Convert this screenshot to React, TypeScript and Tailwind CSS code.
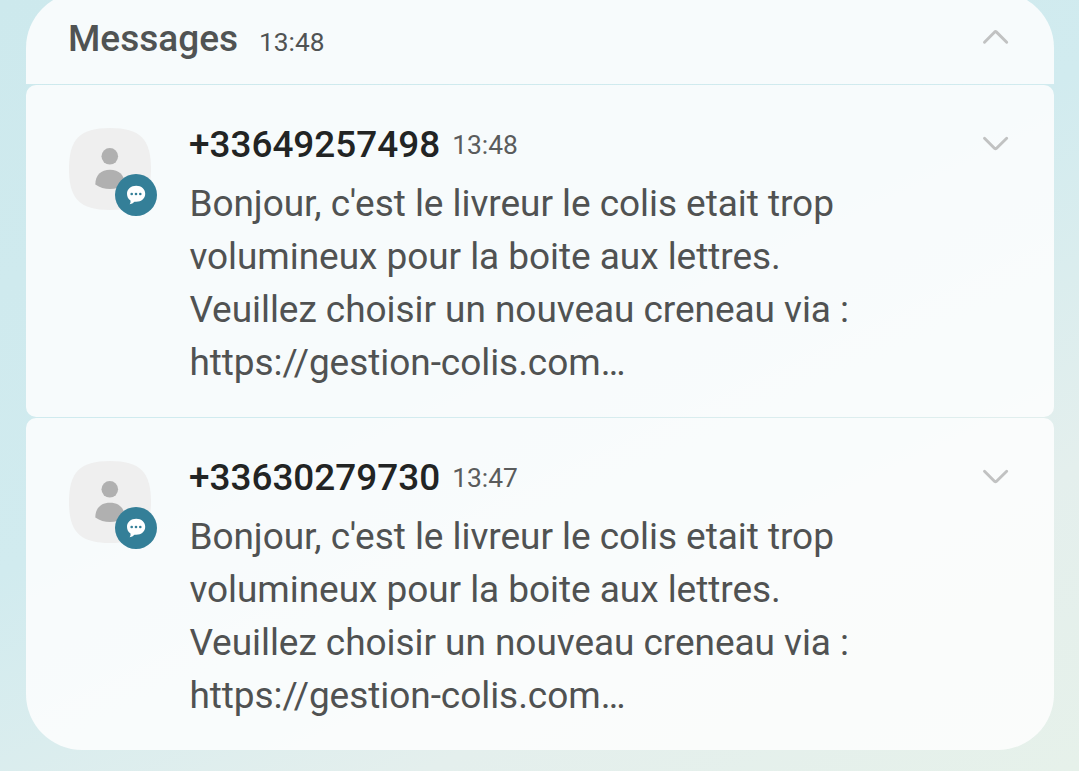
import React from "react";

type Message = { sender: string; time: string; lines: string[] };

const lines = [
  "Bonjour, c'est le livreur le colis etait trop",
  "volumineux pour la boite aux lettres.",
  "Veuillez choisir un nouveau creneau via :",
  "https://gestion-colis.com…",
];

const messages: Message[] = [
  { sender: "+33649257498", time: "13:48", lines },
  { sender: "+33630279730", time: "13:47", lines },
];

function Chevron({ up = false }: { up?: boolean }) {
  return (
    <svg width="28" height="18" viewBox="0 0 28 18" fill="none" stroke="#c1c2c2" strokeWidth="2.9" strokeLinecap="round" strokeLinejoin="round">
      <path d={up ? "M3.500 14.200 13.700 3.900Q14.500 3.200 15.300 3.900L25.700 14.200" : "M3.500 4.200 13.700 14.500Q14.500 15.200 15.300 14.500L25.700 4.200"} />
    </svg>
  );
}

function Avatar() {
  return (
    <svg className="shrink-0" width="90" height="90" viewBox="0 0 90 90">
      <path d="M41 0C71 0 82 11 82 41S71 82 41 82 0 71 0 41 11 0 41 0Z" fill="#efefef" />
      <circle cx="40.800" cy="28.300" r="8.300" fill="#b0b0b0" />
      <path d="M26.300 56.500C26.300 47 32 41.700 41 41.700S55.700 47 55.700 56.500C51 59.500 46.500 61 41 61S31 59.500 26.300 56.500Z" fill="#b0b0b0" />
      <circle cx="67" cy="67" r="21" fill="#347f98" />
      <path d="M67.200 57.800C72.500 57.800 76.200 61.200 76.200 65.800S72.500 73.800 67.200 73.800L65.500 73.700Q63.500 75.900 60.700 76.300Q61.900 74.500 61.500 72.500C59.200 71 58 68.700 58 65.800 58 61.200 62 57.800 67.200 57.800Z" fill="#fff" />
      <circle cx="62.700" cy="66" r="1.300" fill="#347f98" />
      <circle cx="67" cy="66" r="1.300" fill="#347f98" />
      <circle cx="71.300" cy="66" r="1.300" fill="#347f98" />
    </svg>
  );
}

function MessageCard({ message, last }: { message: Message; last: boolean }) {
  return (
    <article className={`relative flex h-[332px] bg-[#fefefe]/85 pl-[43px] pt-[43px] ${last ? "rounded-t-[10px] rounded-b-[56px]" : "rounded-[10px]"}`}>
      <Avatar />
      <div className="ml-[30px] -mt-[10px]">
        <div className="flex h-[53px] items-start">
          <h2 className="text-[36.900px] font-medium leading-[53px] text-[#222424]">{message.sender}</h2>
          <time className="ml-3 pt-px text-[26.400px] leading-[53px] text-[#5a5c5c]">{message.time}</time>
        </div>
        <div className="mt-[6px] pl-[0.4px] text-[37px] leading-[53px] tracking-[-0.050px] text-[#505252]">
          {message.lines.map((line) => (
            <p key={line} className="whitespace-nowrap">{line}</p>
          ))}
        </div>
      </div>
      <div className="absolute right-[45px] top-[49px]">
        <Chevron />
      </div>
    </article>
  );
}

export default function App() {
  return (
    <main className="h-[771px] w-[1079px] overflow-hidden bg-[linear-gradient(155deg,#cde9ed_0%,#d1ebef_45%,#e4efed_76%,#e6f1ea_100%)] pl-[26px] pr-[25px] font-['Roboto',sans-serif]">
      <section className="-mt-2 flex flex-col gap-px">
        <header className="flex h-[92px] items-baseline rounded-t-[56px] bg-[#fefefe]/85 pl-[42px] pr-[45px] pt-5">
          <h1 className="text-[37px] font-medium leading-[53px] text-[#505353]">Messages</h1>
          <time className="ml-[21px] text-[26.300px] leading-[53px] text-[#505353]">13:48</time>
          <div className="ml-auto self-start pt-[16px]">
            <Chevron up />
          </div>
        </header>
        {messages.map((message, index) => (
          <MessageCard key={message.sender} message={message} last={index === messages.length - 1} />
        ))}
      </section>
    </main>
  );
}
